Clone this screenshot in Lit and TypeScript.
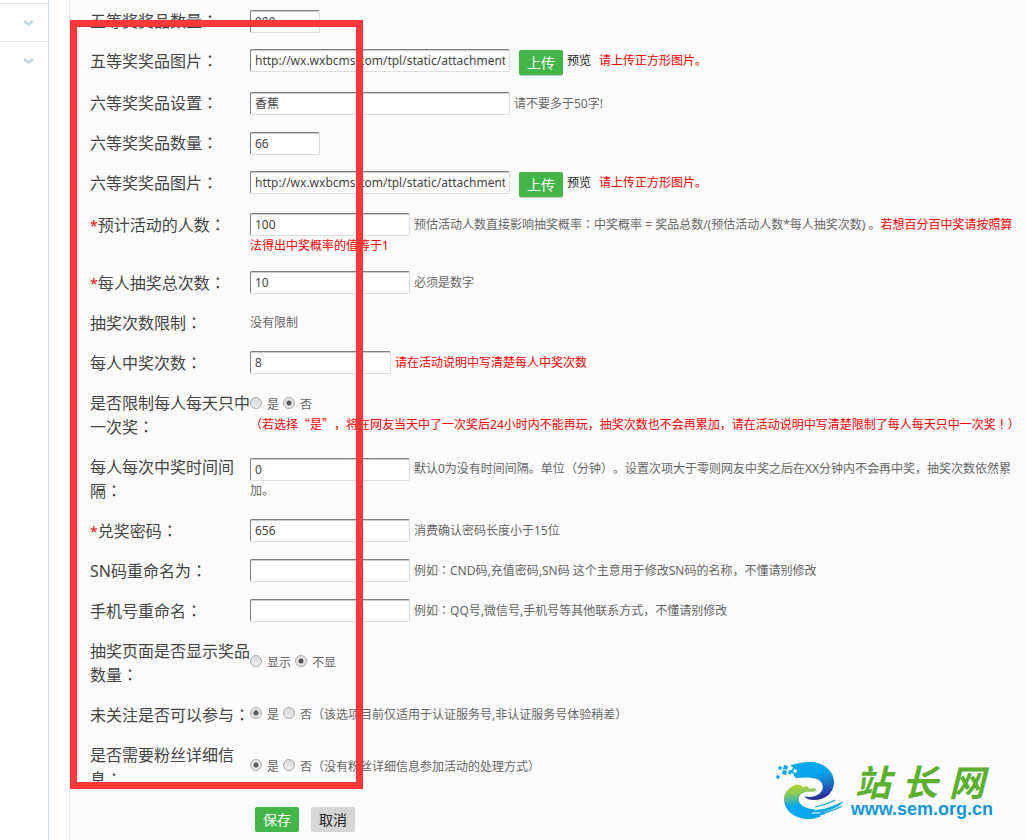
import { LitElement, html, css, svg, nothing, type TemplateResult } from "lit";
import { customElement } from "lit/decorators.js";

interface Option {
  text: string;
  checked?: boolean;
}

interface Field {
  id: string;
  label: string;
  required?: boolean;
  value?: string;
  size?: "xs" | "sm" | "md" | "lg";
  upload?: boolean;
  options?: Option[];
  note?: string;
  warning?: string;
}

const PICTURE_URL = "http://wx.wxbcms.com/tpl/static/attachment/images/prize.jpg";

const FIELDS: Field[] = [
  { id: "fifth-count", label: "五等奖奖品数量：", value: "999", size: "xs" },
  { id: "fifth-picture", label: "五等奖奖品图片：", value: PICTURE_URL, size: "lg", upload: true, warning: "请上传正方形图片。" },
  { id: "sixth-prize", label: "六等奖奖品设置：", value: "香蕉", size: "lg", note: "请不要多于50字!" },
  { id: "sixth-count", label: "六等奖奖品数量：", value: "66", size: "xs" },
  { id: "sixth-picture", label: "六等奖奖品图片：", value: PICTURE_URL, size: "lg", upload: true, warning: "请上传正方形图片。" },
  {
    id: "people", label: "预计活动的人数：", required: true, value: "100", size: "md",
    note: "预估活动人数直接影响抽奖概率：中奖概率 = 奖品总数/(预估活动人数*每人抽奖次数) 。",
    warning: "若想百分百中奖请按照算法得出中奖概率的值等于1",
  },
  { id: "draws", label: "每人抽奖总次数：", required: true, value: "10", size: "md", note: "必须是数字" },
  { id: "limit", label: "抽奖次数限制：", note: "没有限制" },
  { id: "wins", label: "每人中奖次数：", value: "8", size: "sm", warning: "请在活动说明中写清楚每人中奖次数" },
  {
    id: "daily", label: "是否限制每人每天只中一次奖：",
    options: [{ text: "是" }, { text: "否", checked: true }],
    warning: "（若选择“是”，将在网友当天中了一次奖后24小时内不能再玩，抽奖次数也不会再累加，请在活动说明中写清楚限制了每人每天只中一次奖！）",
  },
  {
    id: "interval", label: "每人每次中奖时间间隔：", value: "0", size: "md",
    note: "默认0为没有时间间隔。单位（分钟）。设置次项大于零则网友中奖之后在XX分钟内不会再中奖，抽奖次数依然累加。",
  },
  { id: "password", label: "兑奖密码：", required: true, value: "656", size: "md", note: "消费确认密码长度小于15位" },
  { id: "sn-name", label: "SN码重命名为：", value: "", size: "md", note: "例如：CND码,充值密码,SN码 这个主意用于修改SN码的名称，不懂请别修改" },
  { id: "phone-name", label: "手机号重命名：", value: "", size: "md", note: "例如：QQ号,微信号,手机号等其他联系方式，不懂请别修改" },
  { id: "show-count", label: "抽奖页面是否显示奖品数量：", options: [{ text: "显示" }, { text: "不显", checked: true }] },
  {
    id: "unfollowed", label: "未关注是否可以参与：",
    options: [{ text: "是", checked: true }, { text: "否" }],
    note: "（该选项目前仅适用于认证服务号,非认证服务号体验稍差）",
  },
  {
    id: "fan-info", label: "是否需要粉丝详细信息：",
    options: [{ text: "是", checked: true }, { text: "否" }],
    note: "（没有粉丝详细信息参加活动的处理方式）",
  },
];

/* Colons and brackets sit in the middle of their em square; curly quotes take a full one. */
const typeset = (text: string) =>
  text.split(/([：！（）“”])/).map((part) => {
    if (/^[：！（）]$/.test(part)) return html`<span class="mid">${part}</span>`;
    if (/^[“”]$/.test(part)) return html`<span class="wide">${part}</span>`;
    return part;
  });

@customElement("side-menu")
export class SideMenu extends LitElement {
  static styles = css`
    :host { display: block; box-sizing: border-box; background: #fff; border-right: 1px solid #ccd8e8; padding-top: 3px; }
    .item { display: flex; align-items: center; justify-content: flex-end; width: 100%; height: 38px; padding: 0 14px 0 0; border: 0; border-top: 1px solid #e2e5e8; background: none; }
    .arrow { display: block; width: 12px; height: 8px; fill: none; stroke: #b9d9ea; stroke-width: 2.4; }
  `;

  render() {
    return ["展开菜单一", "展开菜单二"].map(
      (name) => html`<button class="item" type="button" aria-label=${name}>
        <svg class="arrow" viewBox="0 0 12 8" aria-hidden="true"><path d="M2 2 6.5 5.5 11 2" /></svg>
      </button>`,
    );
  }
}

@customElement("site-mark")
export class SiteMark extends LitElement {
  static styles = css`
    :host { display: flex; align-items: flex-start; gap: 5px; }
    .swirl { display: block; flex: none; width: 70px; height: 60px; }
    .words { display: flex; flex-direction: column; }
    .name { font: italic 700 36px/38px "Noto Sans CJK SC", sans-serif; color: #5cb030; display: flex; gap: 11px; padding-left: 4px; }
    .url { font: 700 18px/20px "Liberation Sans", sans-serif; color: #1296db; }
  `;

  render() {
    return html`
      ${svg`<svg class="swirl" viewBox="0 0 70 60" aria-hidden="true">
        <defs>
          <linearGradient id="top" x1="0.3" y1="0" x2="0.6" y2="1">
            <stop offset="0.35" stop-color="#06a7ec" /><stop offset="0.7" stop-color="#1b6fc0" /><stop offset="0.95" stop-color="#27309a" />
          </linearGradient>
          <linearGradient id="low" x1="0.2" y1="0" x2="0.4" y2="1">
            <stop offset="0" stop-color="#b5d334" /><stop offset="0.25" stop-color="#8ac95c" /><stop offset="0.6" stop-color="#06a7ec" />
          </linearGradient>
        </defs>
        <path fill="url(#top)" d="M15 4C22 2 29 1 36 1C49 2 58 11 58 21C58 32 49 39 38 39C34 39 30 38 28 35C32 37 39 36 43 33C47 30 48 25 45 21C41 16 30 16 20 17L15 12Z" />
        <path fill="url(#low)" d="M8 38C8 32 13 26 19 24C22 23 25 24 27 26L31 25L34 28L38 27L41 29C37 32 34 30 30 31C25 32 22 35 23 40C24 44 29 47 35 48C46 49 60 44 68 40C65 44 57 49 50 52C45 56 39 58 33 58C19 58 8 50 8 38Z" />
        <g fill="none" stroke="#fff" stroke-width="1"><path d="M38 49Q52 48 64 41M36 52Q48 53 60 47M44 55Q50 54 56 51" /></g>
        <g fill="none" stroke="#06a7ec" stroke-width="1.2"><path d="M39 46Q50 44 59 39M44 52Q56 51 66 45" /></g>
        <g fill="#06a7ec"><path d="M3 5 6 6 5 9 2 8ZM8 4 12 5 11 9 7 8ZM1 14 4 15 3 18 0 17ZM7 9 11 10 10 14 6 13ZM13 9 17 10 16 14 12 13Z" /></g>
        <g fill="#fff"><path d="M14 5 17 6 16 9 13 8ZM18 8 21 9 20 12 17 11ZM15 12 18 13 17 17 14 16Z" /></g>
      </svg>`}
      <div class="words">
        <div class="name"><span>站</span><span>长</span><span>网</span></div>
        <div class="url">www.sem.org.cn</div>
      </div>
    `;
  }
}

@customElement("app-root")
export class AppRoot extends LitElement {
  static styles = css`
    :host {
      display: block; position: relative; min-height: 100vh; overflow: hidden; background: #fff;
      font: 12px/18px "Noto Sans", "Noto Sans CJK SC", sans-serif; color: #666; text-spacing-trim: space-all;
    }
    .page { display: grid; grid-template-columns: 49px minmax(0, 1fr); column-gap: 20px; min-height: 100vh; }
    .panel { box-sizing: border-box; border-left: 1px solid #e8e8e8; background: #fcfcfc; padding: 9px 4px 0 20px; }
    .rows { display: flex; flex-direction: column; gap: 16px; }
    .row { display: grid; grid-template-columns: 160px minmax(0, 1fr); align-items: center; }
    .label { align-self: start; margin-right: -4px; font-size: 16px; line-height: 24px; color: #444; }
    .mid { font-family: "Noto Sans CJK TC", sans-serif; line-height: 1; }
    .wide { font-family: "Noto Sans CJK SC", sans-serif; line-height: 1; }
    .star, .warning { color: #f00; }
    .star { font-size: 14px; line-height: 1; }
    .note, .warning { vertical-align: middle; }
    .upload { display: flex; align-items: flex-start; line-height: 23px; }
    .text {
      box-sizing: border-box; height: 23px; margin: 0 4px 0 0; padding: 0 4px; vertical-align: middle;
      border: 1px solid #ddd; border-top-color: #808080; border-left-color: #808080; border-radius: 2px;
      box-shadow: inset 0 1px #ccc; background: #fff; color: #444; font: inherit; line-height: 20px;
    }
    .xs { width: 70px; }
    .sm { width: 141px; }
    .md { width: 160px; }
    .lg { width: 260px; }
    .button {
      box-sizing: border-box; height: 25px; padding: 0 8px; border: 0; border-radius: 2px;
      background: #44b549; color: #fff; font: inherit; font-size: 14px; line-height: 25px;
    }
    .upload .button { margin: 1px 4px 0 5px; box-shadow: 0 1px #ccc; }
    .plain { background: #d5d5d5; color: #222; }
    .preview { margin-right: 8px; color: #222; text-decoration: none; }
    .choices { display: flex; align-items: center; line-height: 20px; }
    .choice { display: flex; align-items: center; gap: 5px; margin-right: 4px; }
    .choice:last-of-type { margin-right: 0; }
    .radio {
      appearance: none; box-sizing: border-box; width: 12px; height: 12px; margin: 0 0 4px; border: 1px solid #aaa; border-radius: 50%;
      background: linear-gradient(#d8d8d8, #eee);
    }
    .radio:checked { background: radial-gradient(circle, #555 0 2px, #e4e4e4 3px); }
    .actions { display: flex; gap: 12px; padding: 16px 0 8px 165px; }
    .frame { position: absolute; left: 70px; top: 20px; box-sizing: border-box; width: 293px; height: 769px; border: 7px solid #fd3838; pointer-events: none; }
    .mark { position: absolute; right: 33px; top: 761px; }
  `;

  private control(field: Field): TemplateResult {
    const note = field.note ? html`<span class="note">${typeset(field.note)}</span>` : nothing;
    const warning = field.warning ? html`<span class="warning">${typeset(field.warning)}</span>` : nothing;
    if (field.options) {
      return html`<div>
        <div class="choices" role="radiogroup" aria-labelledby=${`${field.id}-label`}>
          ${field.options.map(
            (option) => html`<label class="choice"><input class="radio" type="radio" name=${field.id} .checked=${!!option.checked} />${option.text}</label>`,
          )}
          ${note}
        </div>
        ${warning}
      </div>`;
    }
    if (field.size === undefined) return html`<div>${note}</div>`;
    const input = html`<input class="text ${field.size}" id=${field.id} type="text" .value=${field.value ?? ""} />`;
    return field.upload
      ? html`<div class="upload">${input}<button class="button" type="button">上传</button><a class="preview" href="#">预览</a>${warning}</div>`
      : html`<div>${input}${note}${warning}</div>`;
  }

  private row(field: Field): TemplateResult {
    const caption = html`${field.required ? html`<span class="star">*</span>` : nothing}${typeset(field.label)}`;
    return html`<div class="row">
      ${field.size
        ? html`<label class="label" for=${field.id}>${caption}</label>`
        : html`<span class="label" id=${`${field.id}-label`}>${caption}</span>`}
      ${this.control(field)}
    </div>`;
  }

  render() {
    return html`
      <div class="page">
        <side-menu></side-menu>
        <form class="panel" @submit=${(event: Event) => event.preventDefault()}>
          <div class="rows">${FIELDS.map((field) => this.row(field))}</div>
          <div class="actions">
            <button class="button" type="submit">保存</button>
            <button class="button plain" type="button">取消</button>
          </div>
        </form>
      </div>
      <div class="frame"></div>
      <site-mark class="mark"></site-mark>
    `;
  }
}
